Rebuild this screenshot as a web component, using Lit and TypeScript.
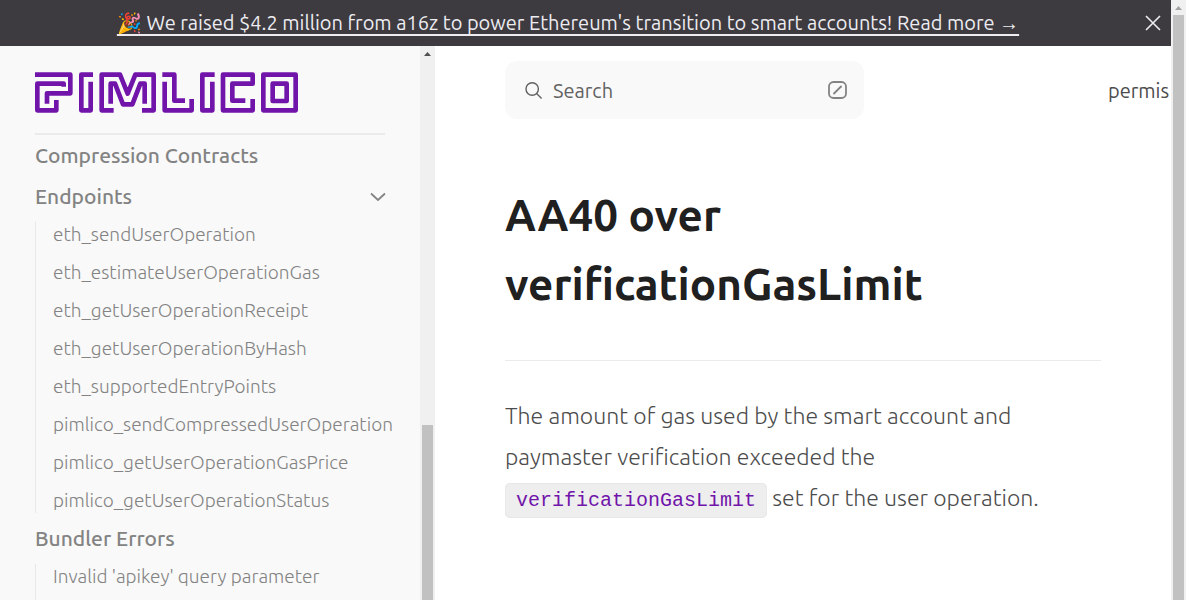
import { LitElement, html, css } from "lit";
import { customElement } from "lit/decorators.js";

const endpoints = [
  "eth_sendUserOperation",
  "eth_estimateUserOperationGas",
  "eth_getUserOperationReceipt",
  "eth_getUserOperationByHash",
  "eth_supportedEntryPoints",
  "pimlico_sendCompressedUserOperation",
  "pimlico_getUserOperationGasPrice",
  "pimlico_getUserOperationStatus",
];

@customElement("pimlico-logo")
export class PimlicoLogo extends LitElement {
  static styles = css`
    :host { display: block; height: 41px; }
    .logo { display: block; fill: none; stroke: #7115aa; stroke-width: 14; stroke-linejoin: round; }
  `;
  render() {
    return html`<svg class="logo" width="263" height="41" viewBox="45 66 789 123" role="img" aria-label="Pimlico">
      <path d="M45 74H151V130H81V161M131 110V101H52V181H109V150" />
      <path d="M219 74H184V181H212V95" />
      <path d="M281 181H245V74H300L323 131L346 74H401V181H366M272 161V101H285L309 163H337L361 101H374V161" />
      <path d="M427 74H463V152H495M434 95V181H515V147" />
      <path d="M584 74H547V181H577V95" />
      <path d="M676 152H637V101H698V74H609V181H698V147" />
      <path d="M730 74H827V181H730ZM758 101H800V153H758Z" />
    </svg>`;
  }
}

@customElement("app-root")
export class AppRoot extends LitElement {
  static styles = css`
    :host {
      display: grid;
      grid-template-columns: minmax(0, 1fr) 15px;
      height: 100vh;
      overflow: hidden;
      background: #fff;
      color: #4c4c4c;
      font-family: Ubuntu, "Noto Sans", sans-serif;
      font-size: 20px;
    }
    * { box-sizing: border-box; }
    a { color: inherit; text-decoration: none; }
    button { border: 0; padding: 0; background: none; color: inherit; font: inherit; cursor: pointer; }
    svg { display: block; fill: none; stroke: currentColor; }
    ul { list-style: none; margin: 0; padding: 0; }
    .page { display: grid; grid-template-rows: 46px minmax(0, 1fr); min-height: 0; }
    .banner {
      display: grid;
      grid-template-columns: minmax(0, 1fr) 36px;
      align-items: center;
      padding-left: 1px;
      background: #3d3a40;
      color: #ececf1;
    }
    .news { justify-self: center; white-space: nowrap; text-decoration: underline; text-decoration-thickness: 2px; text-underline-offset: 4px; }
    .close { display: grid; place-items: center; height: 46px; }
    .columns { display: grid; grid-template-columns: 435px minmax(0, 1fr); min-height: 0; }
    .side { display: grid; grid-template-columns: minmax(0, 1fr) 15px; min-height: 0; background: #f9f9f9; color: #838383; }
    .nav { overflow: hidden; padding: 26px 0 0 35px; }
    .brand { display: block; margin-right: 35px; padding-bottom: 20px; border-bottom: 2px solid #ebebeb; }
    .row { display: flex; align-items: center; justify-content: space-between; width: 351px; height: 41px; line-height: 41px; font-size: 21px; font-weight: 500; text-align: left; white-space: nowrap; }
    .sub { display: grid; gap: 13px; margin: 5px 0; padding-left: 17px; border-left: 1px solid #e8e8e8; line-height: 25px; font-size: 19px; font-weight: 300; white-space: nowrap; }
    .bar { display: flex; flex-direction: column; align-items: center; min-height: 0; background: #f0f0f0; }
    .arrow { height: 15px; fill: #a3a3a3; stroke: none; }
    .arrow.dark { fill: #505050; }
    .thumb { flex: 1; width: 11px; background: #c1c1c1; }
    .thumb.low { margin-top: 364px; }
    .main { min-width: 0; overflow: hidden; padding: 15px 0 0 70px; }
    .top { display: flex; align-items: center; justify-content: space-between; }
    .search { display: flex; align-items: center; width: 359px; height: 58px; padding: 0 17px 0 20px; border-radius: 12px; background: #f9f9f9; color: #616161; }
    .word { flex: 1; padding-left: 10px; text-align: left; }
    .key { color: #838383; }
    .lib { width: 63px; overflow: hidden; white-space: nowrap; }
    .article { margin-right: 70px; }
    h1 { margin: 61px 0 42px; color: #202020; font-size: 44px; line-height: 69px; font-weight: 600; }
    hr { margin: 0; border: 0; border-top: 1px solid #ebebeb; }
    p { margin: 34px 0 0; font-size: 23px; line-height: 41px; font-weight: 300; }
    code { padding: 5px 10px; border: 1px solid #e8e8e8; border-radius: 5px; background: #eee; color: #7115aa; font: 400 20px "Liberation Mono", monospace; }
  `;

  render() {
    return html`
      <div class="page">
        <header class="banner">
          <a class="news" href="#">🎉 We raised $4.2 million from a16z to power Ethereum's transition to smart accounts! Read more →</a>
          <button class="close" aria-label="Close">
            <svg width="16" height="16" viewBox="0 0 16 16" stroke-width="1.6"><path d="M1 1L15 15M15 1L1 15" /></svg>
          </button>
        </header>
        <div class="columns">
          <aside class="side">
            <nav class="nav">
              <a class="brand" href="#"><pimlico-logo></pimlico-logo></a>
              <a class="row" href="#">Compression Contracts</a>
              <button class="row">Endpoints
                <svg width="16" height="10" viewBox="0 0 16 10" stroke-width="1.8"><path d="M1 1.5L8 8L15 1.5" /></svg>
              </button>
              <ul class="sub">${endpoints.map((name) => html`<li><a href="#">${name}</a></li>`)}</ul>
              <a class="row" href="#">Bundler Errors</a>
              <ul class="sub"><li><a href="#">Invalid 'apikey' query parameter</a></li><li></li></ul>
            </nav>
            <div class="bar">
              <svg class="arrow dark" width="15" height="15" viewBox="0 0 15 15"><path d="M4 10H11L7.5 6Z" /></svg>
              <div class="thumb low"></div>
            </div>
          </aside>
          <main class="main">
            <div class="top">
              <button class="search">
                <svg width="18" height="18" viewBox="0 0 18 18" stroke-width="1.4"><circle cx="7.2" cy="8" r="6.2" /><path d="M11.6 12.4L16.6 17.4" /></svg>
                <span class="word">Search</span>
                <svg class="key" width="19" height="18" viewBox="0 0 19 18" stroke-width="1.8"><rect x="1" y="1" width="17" height="16" rx="4.5" /><path d="M6 12.5L13 5.5" stroke-linecap="round" /></svg>
              </button>
              <a class="lib" href="#">permis</a>
            </div>
            <article class="article">
              <h1>AA40 over verificationGasLimit</h1>
              <hr />
              <p>The amount of gas used by the smart account and paymaster verification exceeded the <code>verificationGasLimit</code> set for the user operation.</p>
            </article>
          </main>
        </div>
      </div>
      <div class="bar">
        <svg class="arrow" width="15" height="15" viewBox="0 0 15 15"><path d="M4 10H11L7.5 6Z" /></svg>
        <div class="thumb"></div>
      </div>
    `;
  }
}
